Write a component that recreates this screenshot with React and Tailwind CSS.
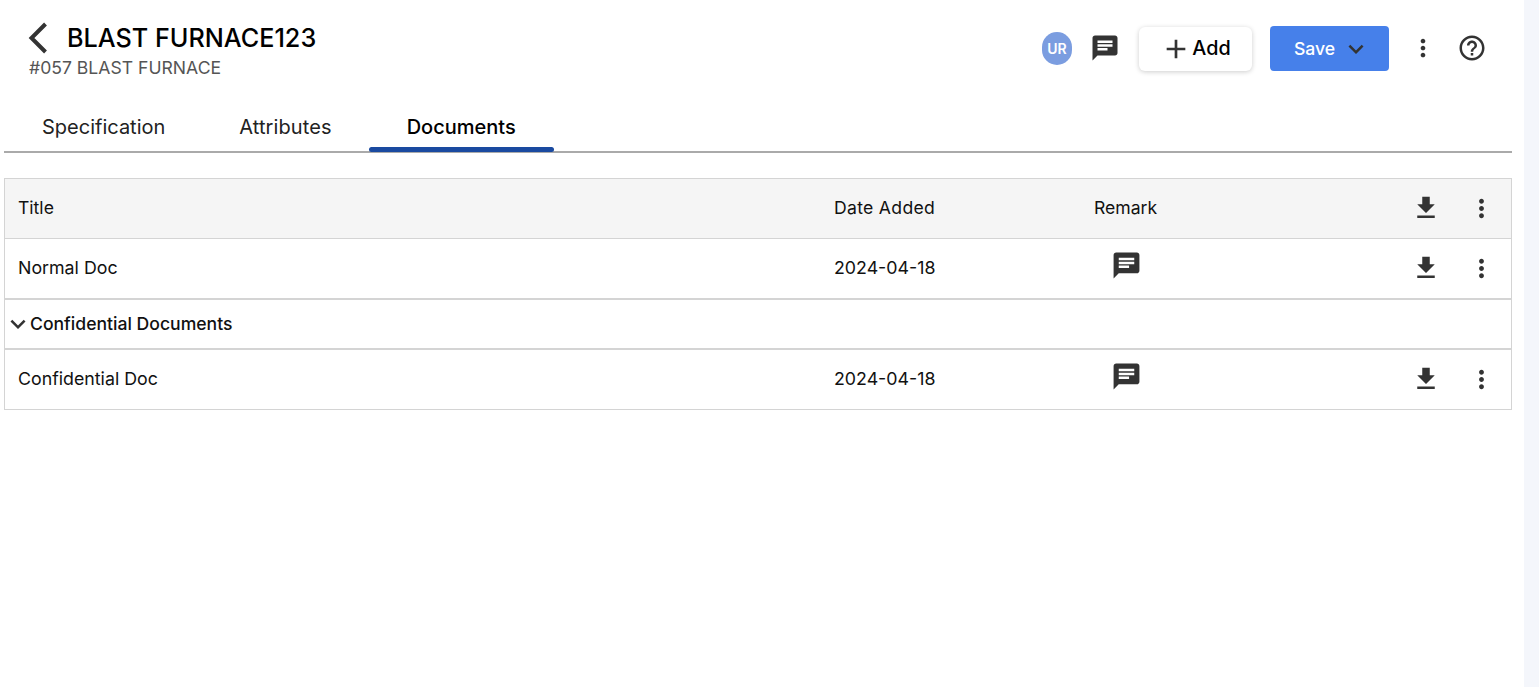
import React from 'react'
import { MdChat, MdFileDownload, MdMoreVert, MdHelpOutline, MdKeyboardArrowDown, MdAdd } from 'react-icons/md'

const DOCS_ROW = 'flex items-center h-[59px] text-[17.8px] text-[#111]'

function RowActions() {
  return (
    <div className="flex items-center w-[120px] shrink-0 text-[#333]">
      <MdFileDownload size={30} className="ml-[20px] -mt-[1px]" />
      <MdMoreVert size={29} className="ml-[26px] -mt-[1px]" />
    </div>
  )
}

function DocRow({ title, date }) {
  return (
    <div className={DOCS_ROW}>
      <div className="flex-1 pl-[13px] -mt-[1px]">{title}</div>
      <div className="w-[260px] shrink-0 -mt-[1px]">{date}</div>
      <div className="w-[297px] shrink-0 pl-[16.5px] text-[#333]">
        <MdChat size={31} className="-mt-[6px]" />
      </div>
      <RowActions />
    </div>
  )
}

export default function App() {
  return (
    <div className="flex h-[687px] overflow-hidden bg-white font-['Inter',sans-serif]">
      <main className="w-[1524px] shrink-0 pl-[4px] pr-[12px]">
        {/* Header */}
        <header className="flex items-start justify-between h-[102px]">
          <div className="flex flex-col pt-[22px] pl-[25px]">
            <div className="flex items-center h-[34px]">
              <svg width="20" height="32" viewBox="0 0 20 32" fill="none" className="text-[#333] -mt-[2px] -ml-[1px] mr-[1px]">
                <path d="M17.5 2 L3.5 16 L17.5 30" stroke="currentColor" strokeWidth="4" />
              </svg>
              <h1 className="ml-[18px] text-[25.2px] font-medium text-black leading-none">BLAST FURNACE123</h1>
            </div>
            <div className="text-[17.6px] leading-[24px] text-[#555]">#057 BLAST FURNACE</div>
          </div>
          <div className="flex items-center pt-[26px] pr-[25px]">
            <div className="flex items-center justify-center w-[30px] h-[33px] rounded-full bg-[#7b9de0] text-white text-[14px] font-semibold">UR</div>
            <MdChat size={30} className="ml-[18px] text-[#333] -mt-[2px]" />
            <button className="flex items-center justify-center ml-[19px] pl-[2px] w-[113px] h-[44px] rounded-[6px] bg-white shadow-[0_1px_5px_rgba(0,0,0,0.2)] text-[19.8px] font-medium text-black">
              <MdAdd size={32} className="text-[#333] -ml-[2px]" />
              <span>Add</span>
            </button>
            <button className="flex items-center justify-center ml-[18px] pl-[6px] w-[119px] h-[45px] rounded-[4px] bg-[#4680ea] text-white text-[17.6px] font-medium">
              <span className="pt-[1px]">Save</span>
              <MdKeyboardArrowDown size={30} className="ml-[6px] text-[#333]" />
            </button>
            <MdMoreVert size={28} className="ml-[20px] -mt-[1px] text-[#333]" />
            <MdHelpOutline size={30} className="ml-[20px] -mt-[1px] text-[#333]" />
          </div>
        </header>

        {/* Tabs */}
        <nav className="flex h-[51px] border-b-2 border-[#aaa]">
          <div className="flex items-center h-[49px] pl-[38px] pr-[36px] pt-[1px] text-[20px] text-[#222]">Specification</div>
          <div className="flex items-center h-[49px] pl-[38px] pr-[37px] pt-[1px] text-[20px] tracking-[0.1px] text-[#222]">Attributes</div>
          <div className="relative flex items-center h-[49px] px-[38px] pt-[1px] text-[20px] font-medium text-black">
            Documents
            <span className="absolute left-0 right-0 -bottom-[1px] h-[5px] rounded-[3px] bg-[#1a4aa0]" />
          </div>
        </nav>

        {/* Table */}
        <section className="mt-[25px] border border-[#d4d4d4]">
          <div className="flex items-center h-[60px] bg-[#f5f5f5] text-[17.6px] text-[#111] border-b border-[#d4d4d4]">
            <div className="flex-1 pl-[13px]">Title</div>
            <div className="w-[260px] shrink-0 tracking-[0.3px]">Date Added</div>
            <div className="w-[297px] shrink-0">Remark</div>
            <RowActions />
          </div>
          <DocRow title="Normal Doc" date="2024-04-18" />
          <div className="flex items-center h-[52px] border-y-2 border-[#d4d4d4] text-[17.6px] font-medium text-[#111]">
            <MdKeyboardArrowDown size={30} className="text-[#333] -ml-[2px] -mr-[3px]" />
            <span>Confidential Documents</span>
          </div>
          <DocRow title="Confidential Doc" date="2024-04-18" />
        </section>
      </main>
      <aside className="flex-1 bg-[#f4f6fb]" />
    </div>
  )
}
